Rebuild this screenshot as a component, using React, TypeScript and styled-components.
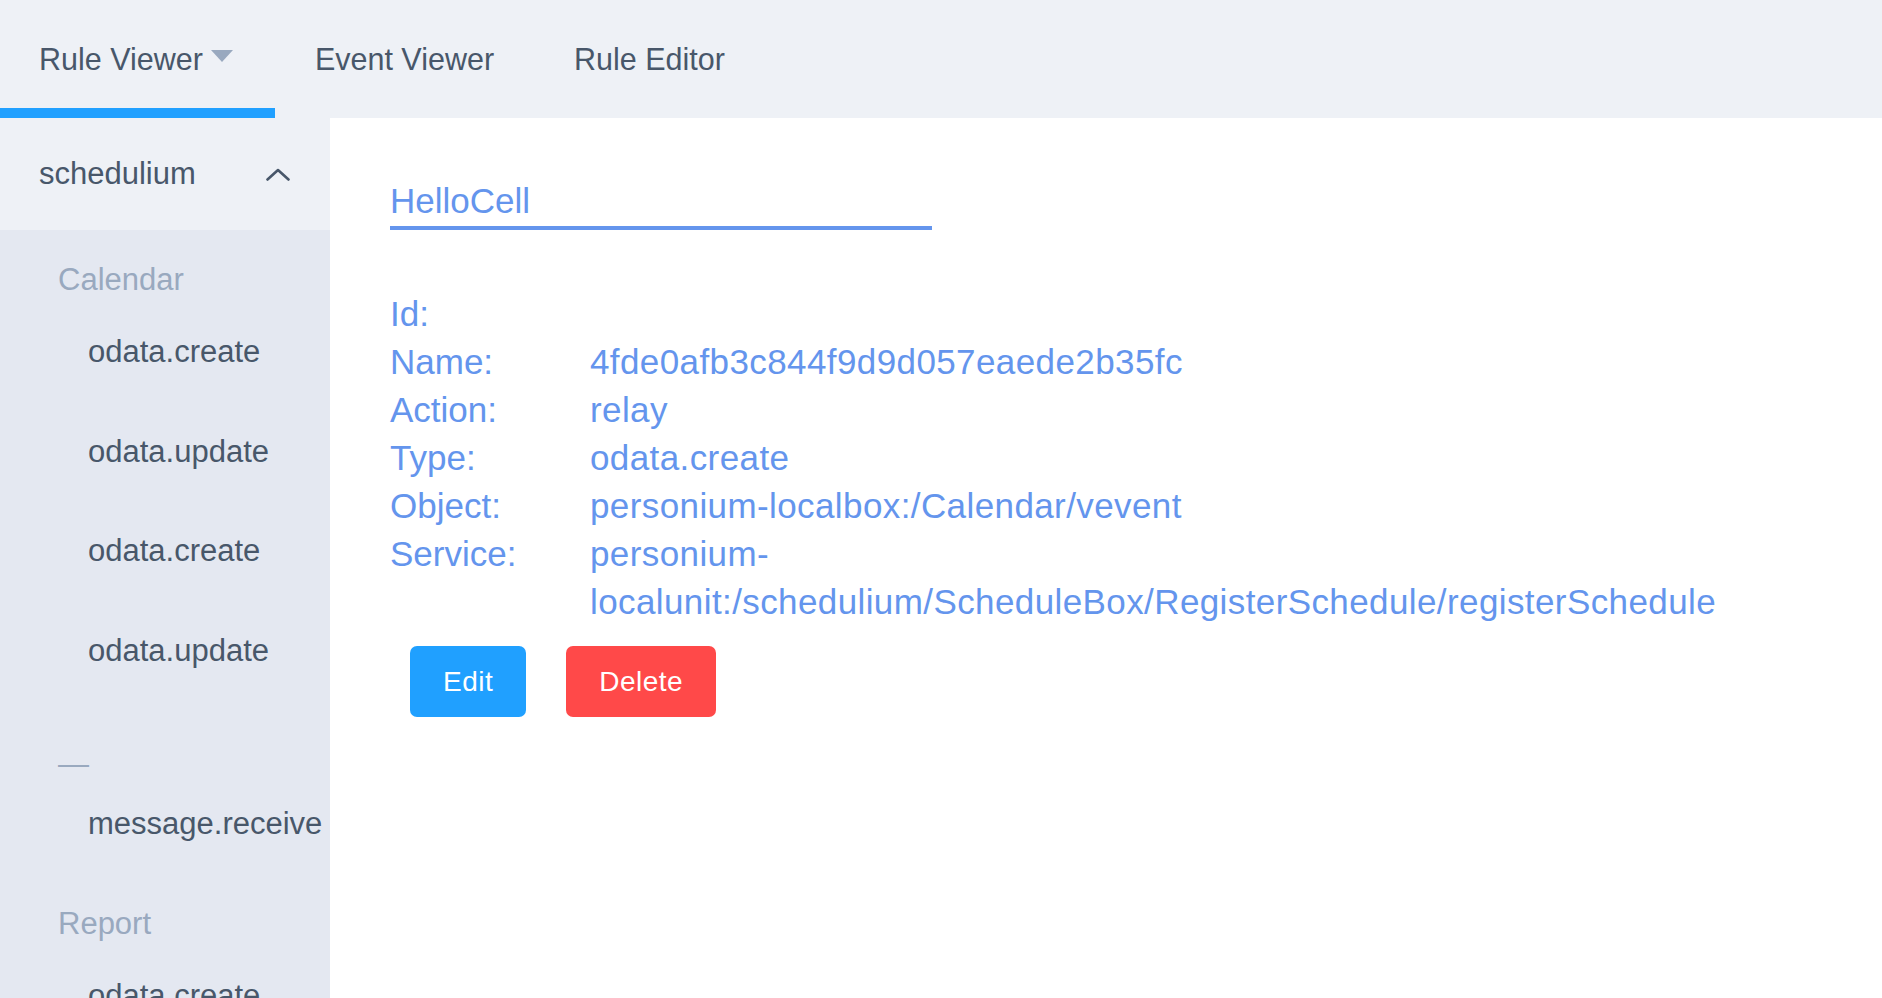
import React from "react";
import styled, { createGlobalStyle } from "styled-components";

const GlobalStyle = createGlobalStyle`
  html, body {
    margin: 0;
    padding: 0;
    background: #ffffff;
  }
  body {
    font-family: "Liberation Sans", Arial, sans-serif;
  }
  * {
    box-sizing: border-box;
  }
`;

const Page = styled.div`
  display: flex;
  flex-direction: column;
  height: 100vh;
  overflow: hidden;
`;

const TopNav = styled.nav`
  display: flex;
  flex-shrink: 0;
  height: 118px;
  background: #eef1f6;
`;

const NavTab = styled.div<{ $active?: boolean; $first?: boolean }>`
  position: relative;
  display: flex;
  align-items: center;
  gap: 8px;
  height: 100%;
  padding: 0 ${(p) => (p.$first ? "42px 0 39px" : "40px")};
  font-size: 30.5px;
  color: #48576a;
  white-space: nowrap;
  cursor: pointer;

  &::after {
    content: "";
    display: ${(p) => (p.$active ? "block" : "none")};
    position: absolute;
    left: 0;
    right: 0;
    bottom: 0;
    height: 10px;
    background: #20a0ff;
  }
`;

const Caret = styled.span`
  display: inline-block;
  width: 0;
  height: 0;
  border-left: 11px solid transparent;
  border-right: 11px solid transparent;
  border-top: 12px solid #99a9bf;
  transform: translateY(-3px);
`;

const Body = styled.div`
  display: flex;
  flex: 1;
  min-height: 0;
`;

const Sidebar = styled.aside`
  display: flex;
  flex-direction: column;
  flex-shrink: 0;
  width: 330px;
  background: #e4e8f1;
`;

const SubmenuTitle = styled.div`
  display: flex;
  align-items: center;
  justify-content: space-between;
  flex-shrink: 0;
  height: 112px;
  padding: 0 40px 0 39px;
  background: #eef1f6;
  font-size: 31px;
  color: #48576a;
`;

const GroupTitle = styled.div<{ $dash?: boolean }>`
  flex-shrink: 0;
  padding: ${(p) => (p.$dash ? "53px" : "28px")} 0 0 58px;
  line-height: ${(p) => (p.$dash ? "21px" : "44px")};
  font-size: 31px;
  color: #99a9bf;
`;

const MenuItem = styled.div`
  flex-shrink: 0;
  height: 99.5px;
  line-height: 99.5px;
  padding-left: 88px;
  font-size: 31px;
  color: #48576a;
  white-space: nowrap;
`;

const Main = styled.main`
  flex: 1;
  padding: 59px 60px 0 60px;
  background: #ffffff;
`;

const TitleField = styled.div`
  width: 542px;
  padding-bottom: 1px;
  font-size: 35px;
  line-height: 48px;
  color: cornflowerblue;
  border-bottom: 4px solid cornflowerblue;
`;

const Details = styled.dl`
  display: grid;
  grid-template-columns: 200px 1fr;
  margin: 60px 0 0 0;
  font-size: 35px;
  line-height: 48px;
  color: cornflowerblue;
`;

const Label = styled.dt`
  margin: 0;
`;

const Value = styled.dd`
  margin: 0;
  letter-spacing: 0.4px;
`;

const ButtonRow = styled.div`
  display: flex;
  gap: 40px;
  margin: 20px 0 0 20px;
`;

const Button = styled.button<{ $variant: "primary" | "danger" }>`
  height: 71px;
  padding: 0 33px;
  border: none;
  border-radius: 7px;
  font-family: inherit;
  font-size: 28px;
  letter-spacing: 0.5px;
  color: #ffffff;
  background: ${(p) => (p.$variant === "primary" ? "#20a0ff" : "#ff4949")};
  cursor: pointer;
`;

const ChevronUp = () => (
  <svg width="24" height="13" viewBox="0 0 24 13" aria-hidden="true">
    <polyline
      points="1.5,11.5 12,2 22.5,11.5"
      fill="none"
      stroke="#48576a"
      strokeWidth="2.6"
      strokeLinecap="round"
      strokeLinejoin="round"
    />
  </svg>
);

const details: [string, string][] = [
  ["Id:", ""],
  ["Name:", "4fde0afb3c844f9d9d057eaede2b35fc"],
  ["Action:", "relay"],
  ["Type:", "odata.create"],
  ["Object:", "personium-localbox:/Calendar/vevent"],
  [
    "Service:",
    "personium-localunit:/schedulium/ScheduleBox/RegisterSchedule/registerSchedule",
  ],
];

export default function App() {
  return (
    <>
      <GlobalStyle />
      <Page>
        <TopNav>
          <NavTab $active $first>
            Rule Viewer
            <Caret />
          </NavTab>
          <NavTab>Event Viewer</NavTab>
          <NavTab>Rule Editor</NavTab>
        </TopNav>
        <Body>
          <Sidebar>
            <SubmenuTitle>
              schedulium
              <ChevronUp />
            </SubmenuTitle>
            <GroupTitle>Calendar</GroupTitle>
            <MenuItem>odata.create</MenuItem>
            <MenuItem>odata.update</MenuItem>
            <MenuItem>odata.create</MenuItem>
            <MenuItem>odata.update</MenuItem>
            <GroupTitle $dash>—</GroupTitle>
            <MenuItem>message.receive</MenuItem>
            <GroupTitle>Report</GroupTitle>
            <MenuItem>odata.create</MenuItem>
          </Sidebar>
          <Main>
            <TitleField>HelloCell</TitleField>
            <Details>
              {details.map(([label, value]) => (
                <React.Fragment key={label}>
                  <Label>{label}</Label>
                  <Value>{value}</Value>
                </React.Fragment>
              ))}
            </Details>
            <ButtonRow>
              <Button $variant="primary">Edit</Button>
              <Button $variant="danger">Delete</Button>
            </ButtonRow>
          </Main>
        </Body>
      </Page>
    </>
  );
}
